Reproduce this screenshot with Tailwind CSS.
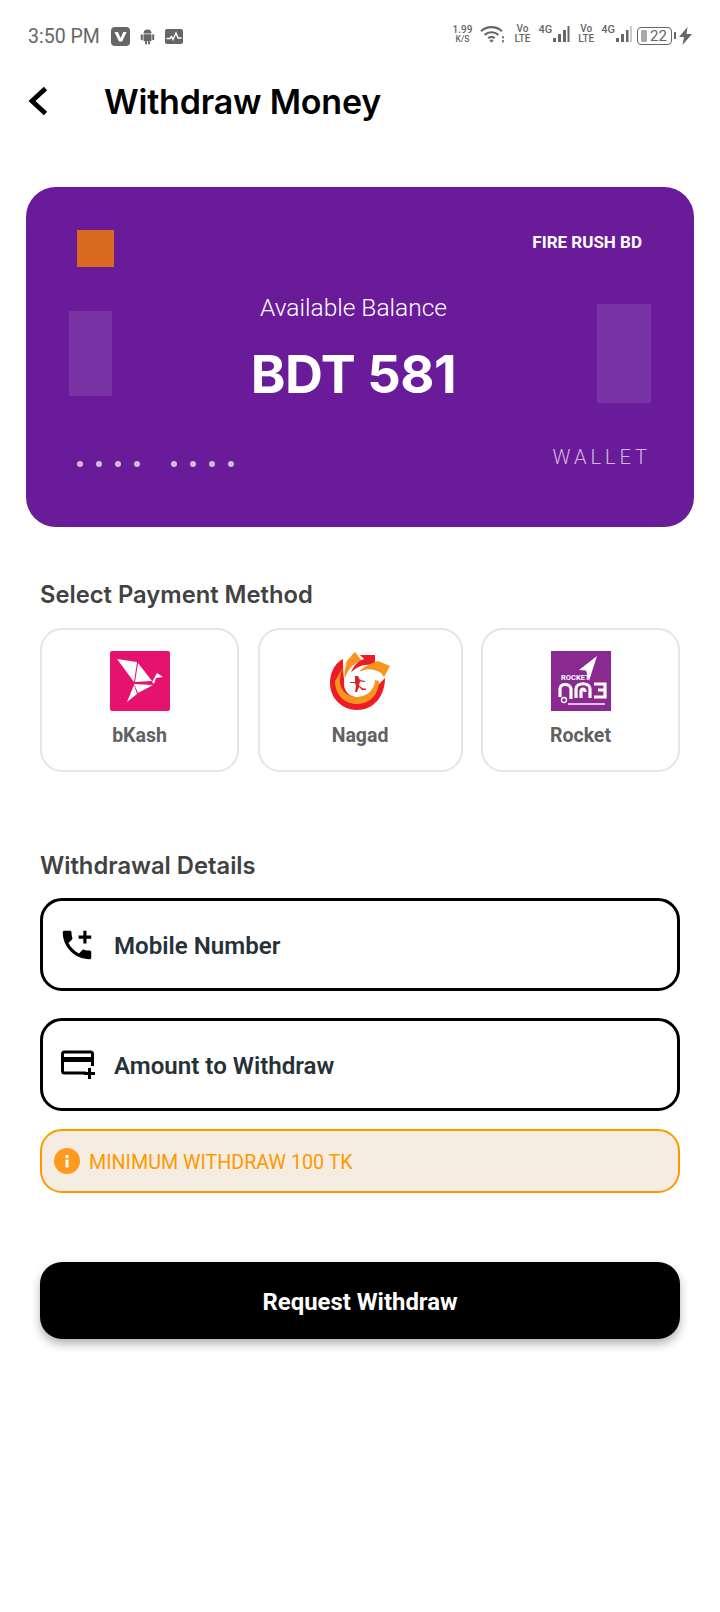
<!DOCTYPE html>
<html>
<head>
<meta charset="utf-8">
<script src="https://cdn.jsdelivr.net/npm/@tailwindcss/browser@4"></script>
</head>
<body class="bg-white font-['Roboto',sans-serif]">
<div class="w-[720px] h-[1612px] bg-white overflow-hidden flex flex-col">

  <!-- status bar -->
  <div class="h-[72px] pl-7 pr-7 pt-[24px] flex items-start justify-between shrink-0">
    <div class="flex items-center h-[24px] text-[#666666]">
      <span class="text-[19.5px] leading-[24px] w-[83px] pt-[1px]">3:50 PM</span>
      <svg class="w-[19px] h-[19px]" viewBox="0 0 19 19"><rect width="19" height="19" rx="4" fill="#666"/><path d="M3.5 5h3.4l2.7 6 2.700-6h3.400l-4.600 9.500h-3z" fill="#fff"/></svg>
      <svg class="w-[15px] h-[17px] ml-[10px]" viewBox="0 0 15 17" fill="#666"><path d="M3.500 5.500a4 4 0 0 1 8 0z"/><rect x="3.500" y="6.200" width="8" height="7" rx="1"/><rect x=".8" y="6.200" width="2" height="6" rx="1"/><rect x="12.200" y="6.200" width="2" height="6" rx="1"/><rect x="5" y="13" width="2" height="3.400" rx="1"/><rect x="8" y="13" width="2" height="3.400" rx="1"/></svg>
      <svg class="w-[18px] h-[15px] ml-[10px]" viewBox="0 0 18 15"><rect width="18" height="15" rx="2" fill="#666"/><path d="M1.500 9.500h3.500l1.500-2 1.500 3 3-6.500 2 5h3.500" stroke="#fff" stroke-width="1.400" fill="none"/></svg>
    </div>
    <div class="flex items-start h-[24px] text-[#666666]">
      <div class="w-[22px] text-center text-[10px] leading-[9px] pt-[1px] font-medium">1.99<br><span class="text-[8.5px]">K/S</span></div>
      <svg class="w-[25px] h-[18px] ml-[6px] mt-[1px]" viewBox="0 0 25 18" fill="none" stroke="#666" stroke-width="2.200"><path d="M1 6.200C7 .8 16 .8 22 6.200"/><path d="M4.600 9.800c4-3.400 9.800-3.400 13.800 0"/><path d="M8.200 13.200c2-1.600 4.600-1.600 6.600 0"/><path d="M11.500 17.200l-1.600-1.700c1-.7 2.200-.7 3.200 0z" fill="#666" stroke-width="1"/><path d="M23 11v2.500M23 15v2.500" stroke-width="1.600"/></svg>
      <div class="ml-[9px] w-[18px] text-center text-[10px] leading-[10px] font-medium">Vo<br>LTE</div>
      <div class="ml-[7px] text-[11px] leading-[12px] font-medium">4G</div>
      <svg class="w-[18px] h-[18px] mt-[1px]" viewBox="0 0 18 18" fill="#666"><rect x="1" y="13" width="3" height="4"/><rect x="6" y="9" width="3" height="8"/><rect x="11" y="5" width="3" height="12"/><rect x="15.500" y="1" width="2" height="16"/></svg>
      <div class="ml-[7px] w-[18px] text-center text-[10px] leading-[10px] font-medium">Vo<br>LTE</div>
      <div class="ml-[6px] text-[11px] leading-[12px] font-medium">4G</div>
      <svg class="w-[18px] h-[18px] mt-[1px]" viewBox="0 0 18 18" fill="#666"><rect x="1" y="13" width="3" height="4"/><rect x="6" y="9" width="3" height="8"/><rect x="11" y="5" width="2.500" height="12"/><rect x="15" y="1" width="2" height="16" fill="#ccc"/></svg>
      <div class="ml-[4px] mt-[3px] w-[35px] h-[18px] border border-[#666] rounded-[4px] flex items-center pl-[3px] gap-[3px]">
        <span class="w-[6px] h-[12px] bg-[#aaa] rounded-[1px]"></span>
        <span class="text-[15px] leading-[16px]">22</span>
      </div>
      <span class="w-[2px] h-[7px] mt-[8px] ml-[2px] bg-[#666]"></span>
      <svg class="w-[13px] h-[18px] ml-[3px] mt-[3px]" viewBox="0 0 13 18" fill="#666"><path d="M8.500 0L0 10h5L3.500 18 13 7H7.500z"/></svg>
    </div>
  </div>

  <!-- header -->
  <div class="h-[58px] pl-[28px] flex items-center shrink-0">
    <svg class="w-[20px] h-[30px]" viewBox="0 0 20 30" fill="none" stroke="#000" stroke-width="4.800"><path d="M17.500 2.500L4 15l13.500 12.500"/></svg>
    <h1 class="ml-[56px] pt-[2px] text-[34px] leading-[40px] font-semibold text-black font-['Inter',sans-serif] tracking-[-0.2px]">Withdraw Money</h1>
  </div>

  <!-- balance card -->
  <div class="relative mt-[57px] mx-[26px] h-[340px] rounded-[30px] bg-[#6a1b9a] overflow-hidden shrink-0 flex flex-col">
    <div class="absolute left-[43px] top-[124px] w-[43px] h-[85px] bg-white/10"></div>
    <div class="absolute left-[571px] top-[117px] w-[54px] h-[99px] bg-white/10"></div>
    <div class="relative pt-[43px] pl-[51px] pr-[52px] flex items-start justify-between">
      <div class="w-[37px] h-[37px] bg-[#d9691f]"></div>
      <span class="text-[17px] leading-[24px] font-bold text-white">FIRE RUSH BD</span>
    </div>
    <div class="relative mt-[24px] pr-[13px] flex flex-col items-center text-white">
      <span class="text-[24.500px] leading-[34px] font-light">Available Balance</span>
      <span class="mt-[19px] text-[52.500px] leading-[60px] font-bold font-['Inter',sans-serif] tracking-[-0.5px]">BDT 581</span>
    </div>
    <div class="relative mt-[41px] pl-[51px] pr-[43px] flex items-start justify-between">
      <div class="flex items-center mt-[16px] h-[6px]">
        <div class="flex gap-[13px]"><span class="w-[6px] h-[6px] rounded-full bg-white/70"></span><span class="w-[6px] h-[6px] rounded-full bg-white/70"></span><span class="w-[6px] h-[6px] rounded-full bg-white/70"></span><span class="w-[6px] h-[6px] rounded-full bg-white/70"></span></div>
        <div class="flex gap-[13px] ml-[31px]"><span class="w-[6px] h-[6px] rounded-full bg-white/70"></span><span class="w-[6px] h-[6px] rounded-full bg-white/70"></span><span class="w-[6px] h-[6px] rounded-full bg-white/70"></span><span class="w-[6px] h-[6px] rounded-full bg-white/70"></span></div>
      </div>
      <span class="text-[20px] leading-[24px] font-light tracking-[4px] text-white/70">WALLET</span>
    </div>
  </div>

  <!-- payment -->
  <div class="px-[40px] mt-[52px] shrink-0">
    <h2 class="text-[23.750px] leading-[32px] font-semibold text-[#424242] font-['Inter',sans-serif]">Select Payment Method</h2>
    <div class="mt-[17px] flex justify-between">
      <div class="w-[199px] h-[144px] rounded-[22px] border-2 border-[#e5e5e5] flex flex-col items-center pt-[21px]">
        <svg class="w-[60px] h-[60px]" viewBox="0 0 60 60"><rect width="60" height="60" rx="2" fill="#e5126e"/><g fill="#fff"><polygon points="7,8 27,11 24,31"/><polygon points="28,12 42,30 25,31"/><polygon points="42,31 47,22 53,26 46,27 44,33"/><polygon points="24,33 43,34 28,42"/><polygon points="24,34 27,43 17,51"/></g></svg>
        <span class="mt-[13px] text-[19.500px] leading-[24px] font-bold text-[#616161]">bKash</span>
      </div>
      <div class="w-[205px] h-[144px] rounded-[22px] border-2 border-[#e5e5e5] flex flex-col items-center pt-[21px]">
        <svg class="w-[60px] h-[60px]" viewBox="0 0 60 60"><path d="M13 8C3 13 0 24 0 32c0 15 12 27 27 27 16 0 28-13 28-32L42 40c-5 8-22 8-26-4C13 27 13 17 13 8z" fill="#ed1c24"/><path d="M20 5L5 30c0 14 10 23 22 23 12 0 22-9 22-23l-4-1c0 9-8 17-18 17-10 0-17-7-17-16 0-8 3-15 8-19z" fill="#f7941d"/><path d="M25 1l7 9c-9 2-15 9-17 18-2-9 2-20 10-27z" fill="#f7941d"/><path d="M30 4h15v14l-4-4c-8-1-15 2-20 8 2-7 7-12 13-14z" fill="#ed1c24"/><path d="M48 10l12 5-6 11-3-4c-8-5-17-5-24 1 5-7 13-10 21-13z" fill="#f7941d"/><circle cx="27" cy="33" r="13" fill="#fff"/><path d="M25 25h3l2 4 5 1v1l-5-.5-1 4 4 3h3v1.500h-4l-3-3-2 5h-2l1-6-1-3h-5v-1h5z" fill="#d8232a"/></svg>
        <span class="mt-[13px] text-[19.500px] leading-[24px] font-bold text-[#616161]">Nagad</span>
      </div>
      <div class="w-[199px] h-[144px] rounded-[22px] border-2 border-[#e5e5e5] flex flex-col items-center pt-[21px]">
        <svg class="w-[60px] h-[60px]" viewBox="0 0 60 60"><rect width="60" height="60" fill="#8a2a90"/><path d="M46 5L28 19l7 .5 3 10.500z" fill="#fff"/><text x="10" y="29" font-size="7.500" font-weight="700" fill="#fff" font-family="Roboto">ROCKET</text><path d="M9 46V38C9 32 19 32 20 38V48M25 47V38C25 31 39 31 39 38V47M30 47V41C30 37 34 37 34 41M43 33H54V46H43M47 39H54" fill="none" stroke="#fff" stroke-width="3.200"/><circle cx="13" cy="49" r="2.500" fill="none" stroke="#fff" stroke-width="1.300"/><rect x="17" y="52" width="37" height="2" fill="#fff" opacity=".7"/></svg>
        <span class="mt-[13px] text-[19.500px] leading-[24px] font-bold text-[#616161]">Rocket</span>
      </div>
    </div>
  </div>

  <!-- details -->
  <div class="px-[40px] mt-[78px] shrink-0">
    <h2 class="text-[23.750px] leading-[32px] font-semibold text-[#424242] font-['Inter',sans-serif]">Withdrawal Details</h2>
    <div class="mt-[16px] h-[93px] rounded-[22px] border-[3px] border-black flex items-center pl-[15px]">
      <svg class="w-[38px] h-[38px] text-black" viewBox="0 0 24 24" fill="currentColor"><path d="M20 15.500c-1.250 0-2.450-.2-3.570-.57-.35-.11-.74-.03-1.020.24l-2.200 2.200c-2.830-1.440-5.150-3.750-6.590-6.590l2.200-2.210c.28-.26.36-.65.25-1C8.700 6.450 8.500 5.250 8.500 4c0-.55-.45-1-1-1H4c-.55 0-1 .45-1 1 0 9.390 7.610 17 17 17 .55 0 1-.45 1-1v-3.500c0-.55-.45-1-1-1zM21 6h-3V3h-2v3h-3v2h3v3h2V8h3z"/></svg>
      <span class="ml-[18px] pt-[3px] text-[24.100px] leading-[30px] font-semibold text-[#263238]">Mobile Number</span>
    </div>
    <div class="mt-[27px] h-[93px] rounded-[22px] border-[3px] border-black flex items-center pl-[18px]">
      <svg class="w-[35px] h-[30px]" viewBox="0 0 35 30" fill="none" stroke="#000"><path d="M25 23H3.500c-1 0-2-.8-2-2V4c0-1.200 1-2 2-2h26c1 0 2 .8 2 2v12" stroke-width="3"/><rect x="1.500" y="7" width="30" height="5" fill="#000" stroke="none"/><path d="M28.500 18v11M23 23.500h11" stroke-width="3"/></svg>
      <span class="ml-[18px] pt-[3px] text-[24.100px] leading-[30px] font-semibold text-[#263238]">Amount to Withdraw</span>
    </div>
    <div class="mt-[18px] h-[64px] rounded-[22px] border-2 border-[#ff9800] bg-[#f5ede2] flex items-center pl-[12px]">
      <svg class="w-[26px] h-[26px]" viewBox="0 0 26 26"><circle cx="13" cy="13" r="13" fill="#ff9a1f"/><rect x="11.500" y="11.500" width="3" height="8" fill="#fff"/><rect x="11.500" y="7" width="3" height="3" fill="#fff"/></svg>
      <span class="ml-[9px] pt-[3px] text-[19.700px] leading-[28px] text-[#ff9800]">MINIMUM WITHDRAW 100 TK</span>
    </div>
    <button class="mt-[69px] w-full h-[77px] pt-[4px] rounded-[22px] bg-black text-white text-[23.900px] font-bold shadow-[0_5px_10px_rgba(0,0,0,0.3)]">Request Withdraw</button>
  </div>
</div>
</body>
</html>
